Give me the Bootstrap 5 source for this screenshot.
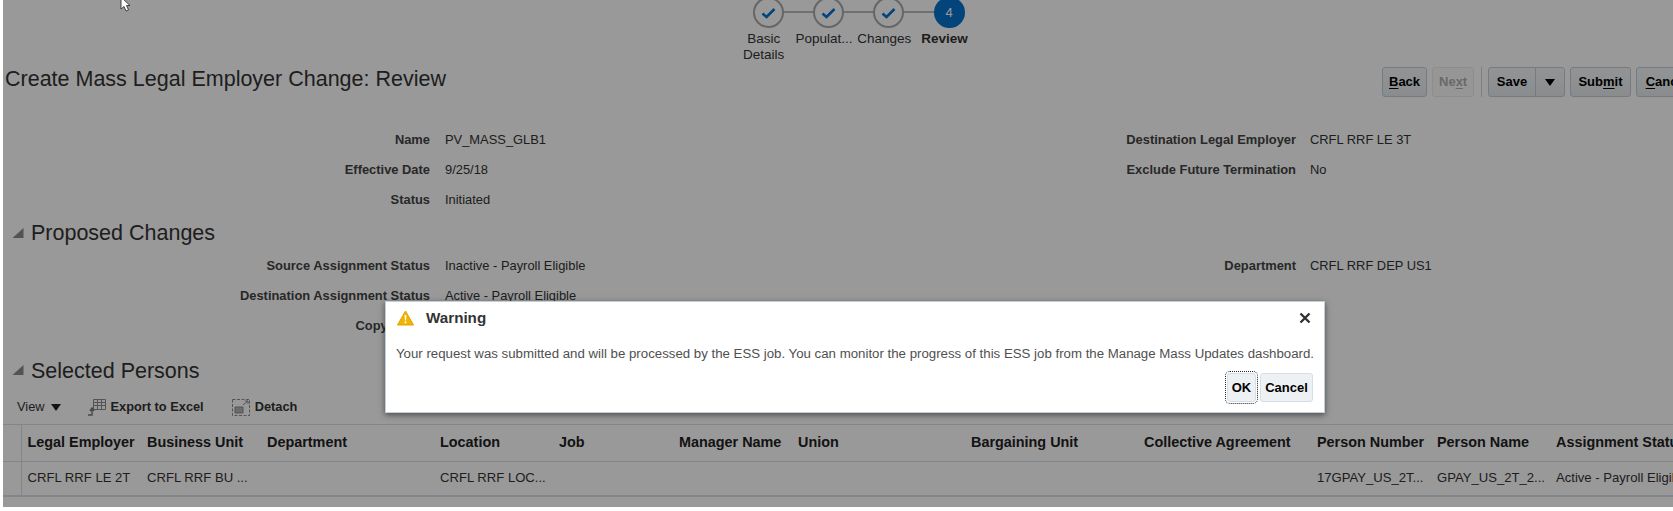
<!DOCTYPE html>
<html lang="en">

<head>
    <meta charset="UTF-8">
    <title>Create Mass Legal Employer Change: Review</title>
    <link rel="stylesheet" href="https://cdn.jsdelivr.net/npm/bootstrap@5.3.0/dist/css/bootstrap.min.css">
    <style>
        html, body {
            height: 511px;
            overflow: hidden;
        }

        body {
            position: relative;
            width: 1673px;
            background: #fff;
            color: #333;
            font-family: "Liberation Sans", Arial, sans-serif;
            font-size: 12.9px;
        }

        #page {
            position: relative;
            z-index: 0;
            width: 1670px;
            height: 507px;
            margin-left: 3px;
            overflow: hidden;
        }

        /* train */
        .train {
            height: 63px;
            padding-left: 735px;
        }

        .train-step {
            width: 60.3px;
            position: relative;
            text-align: center;
            line-height: 16px;
            font-size: 13.5px;
        }

        .train-label {
            padding-right: 9px;
            margin-left: -10px;
            margin-right: -10px;
        }

        .train-dot {
            width: 31px;
            height: 31px;
            margin: -3px auto 3px;
            border-radius: 50%;
            border: 2px solid #aaa;
            background: #fff;
            color: #0572ce;
            position: relative;
            z-index: 1;
        }

        .train-dot.current {
            border: 0;
            background: #0572ce;
            color: #fff;
            font-size: 13px;
        }

        .train-step:not(:last-child)::after {
            content: "";
            position: absolute;
            left: 30px;
            top: 11px;
            width: 60px;
            height: 2px;
            background: #bbb;
        }

        /* title bar */
        .title-bar {
            height: 36px;
            padding-left: 2px;
        }

        .page-title {
            font-size: 21.5px;
            font-weight: 400;
            margin: 0;
            line-height: 32px;
            color: #333;
        }

        .tool-btn {
            height: 30px;
            padding: 0 6px;
            font-size: 13px;
            font-weight: 700;
            line-height: 28px;
            color: #000;
            background: linear-gradient(#f4f7f9, #e6eaed);
            border: 1px solid #c4ced7;
            border-radius: 3px;
            flex: none;
        }

        .tool-btn u {
            text-underline-offset: 2px;
        }

        .tool-btn[disabled] {
            color: #b0b0b0;
            background: #fbfbfb;
            border-color: #ececec;
            opacity: 1;
        }

        .btn-save {
            width: 48px;
            border-radius: 3px 0 0 3px;
            padding: 0;
        }

        .btn-caret {
            width: 30px;
            margin-left: -1px;
            border-radius: 0 3px 3px 0;
            padding: 0;
        }

        .btn-back { width: 45px; }
        .btn-next { width: 42px; margin-left: 5px; }
        .btn-submit { width: 61px; margin-left: 5px; }
        .btn-cancel-bar { width: 62px; margin-left: 5px; }

        .tool-sep {
            width: 1px;
            height: 30px;
            background: #d3d8dc;
            margin: 0 6px 0 7px;
            flex: none;
        }

        .caret-down {
            display: inline-block;
            width: 0;
            height: 0;
            border-left: 5px solid transparent;
            border-right: 5px solid transparent;
            border-top: 7px solid #000;
        }

        .actions {
            width: 291px;
            flex: none;
            margin-left: auto;
            margin-top: 4px;
            height: 30px;
        }

        /* form */
        .form-row-line {
            height: 30px;
            align-items: center;
        }

        .field-label {
            width: 442px;
            text-align: right;
            font-weight: 700;
            color: #444;
            padding-right: 15px;
            flex: none;
        }

        .field-value {
            width: 450px;
            flex: none;
            color: #333;
        }

        .field-label-r {
            width: 415px;
            text-align: right;
            font-weight: 700;
            color: #444;
            padding-right: 14px;
            flex: none;
        }

        .summary-form {
            margin-top: 26px;
        }

        .section-head {
            height: 36px;
            align-items: center;
            padding-left: 9px;
        }

        .section-persons {
            margin-top: 11px;
        }

        .section-head h2 {
            font-size: 21.5px;
            font-weight: 400;
            margin: 0 0 0 7px;
            padding-top: 2px;
            color: #333;
        }

        .section-persons h2 {
            padding-top: 4px;
        }

        .disclose {
            width: 12px;
            height: 12px;
            flex: none;
        }

        /* table toolbar */
        .grid-tools {
            height: 36px;
            padding-left: 14px;
            padding-top: 2px;
            font-size: 12.8px;
            font-weight: 700;
            color: #333;
        }

        .view-menu {
            font-weight: 400;
            margin-right: 26px;
        }

        .view-menu .caret-down {
            margin-left: 6px;
            border-top-color: #222;
        }

        .grid-tool {
            margin-right: 27px;
        }

        /* table */
        .persons {
            table-layout: fixed;
            width: 1720px;
            margin: 0;
            border-collapse: collapse;
        }

        .persons th, .persons td {
            padding: 0 2px 0 6px;
            background: transparent;
            white-space: nowrap;
            overflow: hidden;
            text-overflow: ellipsis;
            border: 0;
            color: #333;
            vertical-align: middle;
        }

        .persons th {
            height: 37px;
            font-size: 14.4px;
            color: #222;
            border-top: 1px solid #d6dfe6;
            border-bottom: 1px solid #d6dfe6;
        }

        .persons td {
            height: 34px;
            font-size: 13.1px;
            border-bottom: 2px solid #d6dfe6;
        }

        .persons .row-head {
            padding: 0;
            border-right: 1px solid #d6dfe6;
        }

        .c0 { width: 18px; }
        .c1 { width: 119px; }
        .c1w { width: 120px; }
        .c2 { width: 174px; }
        .c3 { width: 173px; }

        /* glass over the page */
        #glass {
            position: absolute;
            left: 3px;
            top: 0;
            right: 0;
            bottom: 4px;
            background: rgba(0, 0, 0, .4);
        }

        .warn-dialog {
            position: absolute;
            left: 385px;
            top: 301px;
            width: 940px;
            height: 112px;
            border: 1px solid #c4ced7;
            border-radius: 0;
            box-shadow: 0 2px 6px rgba(0, 0, 0, .5);
            background: #fff;
            padding: 6px 11px 0 10px;
        }

        .warn-head {
            height: 20px;
        }

        .warn-icon {
            margin-left: 1px;
        }

        .warn-title {
            font-size: 15.2px;
            font-weight: 700;
            color: #333;
            margin-left: 12px;
        }

        .warn-close {
            width: 12px;
            height: 12px;
            margin-right: 2px;
        }

        .warn-text {
            margin: 18px 0 0;
            font-size: 13.25px;
            color: #4f4f4f;
            line-height: 16px;
            white-space: nowrap;
        }

        .warn-actions {
            margin-top: 11px;
        }

        .dlg-btn {
            height: 29px;
            padding: 0;
            font-size: 13px;
            font-weight: 700;
            line-height: 27px;
            color: #000;
            background: #eef1f3;
            border: 1px solid #d6dfe6;
            border-radius: 3px;
        }

        .dlg-ok {
            width: 29px;
            margin-right: 4px;
            outline: 1px dotted #222;
            outline-offset: 1px;
        }

        .dlg-cancel {
            width: 53px;
        }

        #cursor {
            position: absolute;
            left: 120px;
            top: -3px;
            width: 14px;
            height: 16px;
        }
    </style>
</head>

<body>
    <div id="page">
        <div class="train d-flex">
            <div class="train-step">
                <div class="train-dot d-flex align-items-center justify-content-center">
                    <svg width="15" height="12" viewBox="0 0 15 12"><path d="M1.5 6.5 5.5 10 13.5 2" fill="none" stroke="currentColor" stroke-width="2.6"/></svg>
                </div>
                <div class="train-label">Basic<br>Details</div>
            </div>
            <div class="train-step">
                <div class="train-dot d-flex align-items-center justify-content-center">
                    <svg width="15" height="12" viewBox="0 0 15 12"><path d="M1.5 6.5 5.5 10 13.5 2" fill="none" stroke="currentColor" stroke-width="2.6"/></svg>
                </div>
                <div class="train-label">Populat...</div>
            </div>
            <div class="train-step">
                <div class="train-dot d-flex align-items-center justify-content-center">
                    <svg width="15" height="12" viewBox="0 0 15 12"><path d="M1.5 6.5 5.5 10 13.5 2" fill="none" stroke="currentColor" stroke-width="2.6"/></svg>
                </div>
                <div class="train-label">Changes</div>
            </div>
            <div class="train-step">
                <div class="train-dot current d-flex align-items-center justify-content-center">4</div>
                <div class="train-label"><b>Review</b></div>
            </div>
        </div>

        <div class="title-bar d-flex">
            <h1 class="page-title">Create Mass Legal Employer Change: Review</h1>
            <div class="actions d-flex align-items-center">
                <button class="btn tool-btn btn-back"><u>B</u>ack</button>
                <button class="btn tool-btn btn-next" disabled>Ne<u>x</u>t</button>
                <span class="tool-sep"></span>
                <button class="btn tool-btn btn-save">Save</button>
                <button class="btn tool-btn btn-caret"><span class="caret-down"></span></button>
                <button class="btn tool-btn btn-submit">Sub<u>m</u>it</button>
                <button class="btn tool-btn btn-cancel-bar"><u>C</u>ancel</button>
            </div>
        </div>

        <div class="summary-form">
            <div class="d-flex form-row-line">
                <div class="field-label">Name</div>
                <div class="field-value">PV_MASS_GLB1</div>
                <div class="field-label-r">Destination Legal Employer</div>
                <div>CRFL RRF LE 3T</div>
            </div>
            <div class="d-flex form-row-line">
                <div class="field-label">Effective Date</div>
                <div class="field-value">9/25/18</div>
                <div class="field-label-r">Exclude Future Termination</div>
                <div>No</div>
            </div>
            <div class="d-flex form-row-line">
                <div class="field-label">Status</div>
                <div class="field-value">Initiated</div>
            </div>
        </div>

        <div class="section-head d-flex">
            <svg class="disclose" viewBox="0 0 12 12"><path d="M11.5 1V11H.5Z" fill="#8a8a8a"/></svg>
            <h2>Proposed Changes</h2>
        </div>
        <div>
            <div class="d-flex form-row-line">
                <div class="field-label">Source Assignment Status</div>
                <div class="field-value">Inactive - Payroll Eligible</div>
                <div class="field-label-r">Department</div>
                <div>CRFL RRF DEP US1</div>
            </div>
            <div class="d-flex form-row-line">
                <div class="field-label">Destination Assignment Status</div>
                <div class="field-value">Active - Payroll Eligible</div>
            </div>
            <div class="d-flex form-row-line">
                <div class="field-label">Copy Salary</div>
            </div>
        </div>

        <div class="section-head section-persons d-flex">
            <svg class="disclose" viewBox="0 0 12 12"><path d="M11.5 1V11H.5Z" fill="#8a8a8a"/></svg>
            <h2>Selected Persons</h2>
        </div>

        <div class="grid-tools d-flex align-items-center">
            <span class="view-menu">View<span class="caret-down"></span></span>
            <span class="grid-tool d-flex align-items-center gap-1">
                <svg width="20" height="20" viewBox="0 0 20 20" fill="none" stroke="#8d8d8d">
                    <path d="M6.5 2.5h12v10h-12zM6.5 5.5h12M6.5 8.5h12M10.5 2.5v10M14.5 2.5v10"/>
                    <path d="M1 18h4v-6M3 14l2-3 2 3" stroke="#777" stroke-width="1.4"/>
                </svg>
                Export to Excel
            </span>
            <span class="grid-tool d-flex align-items-center gap-1">
                <svg width="20" height="20" viewBox="0 0 20 20" fill="none" stroke="#8d8d8d">
                    <path d="M1.5 2.5h17v16h-17z" stroke-dasharray="3 1.5"/>
                    <path d="M4 10h8v6H4z" fill="#b5b5b5"/>
                    <path d="M12 8l5-4M14 4h3v3"/>
                </svg>
                Detach
            </span>
        </div>

        <table class="table persons">
            <colgroup>
                <col class="c0"><col class="c1w"><col class="c1w"><col class="c3"><col class="c1"><col class="c1w"><col class="c1"><col class="c3"><col class="c3"><col class="c3"><col class="c1w"><col class="c1"><col class="c2">
            </colgroup>
            <thead>
                <tr>
                    <th class="row-head"></th>
                    <th>Legal Employer</th>
                    <th>Business Unit</th>
                    <th>Department</th>
                    <th>Location</th>
                    <th>Job</th>
                    <th>Manager Name</th>
                    <th>Union</th>
                    <th>Bargaining Unit</th>
                    <th>Collective Agreement</th>
                    <th>Person Number</th>
                    <th>Person Name</th>
                    <th>Assignment Status</th>
                </tr>
            </thead>
            <tbody>
                <tr>
                    <td class="row-head"></td>
                    <td>CRFL RRF LE 2T</td>
                    <td>CRFL RRF BU ...</td>
                    <td></td>
                    <td>CRFL RRF LOC...</td>
                    <td></td>
                    <td></td>
                    <td></td>
                    <td></td>
                    <td></td>
                    <td>17GPAY_US_2T...</td>
                    <td>GPAY_US_2T_2...</td>
                    <td>Active - Payroll Eligible</td>
                </tr>
            </tbody>
        </table>
    </div>

    <div id="glass"></div>

    <div class="card warn-dialog">
        <div class="warn-head d-flex align-items-center">
            <svg class="warn-icon" width="17" height="16" viewBox="0 0 17 16">
                <path d="M8.5 1 16.5 15H.5Z" fill="#f0b400" stroke="#e2a200" stroke-linejoin="round"/>
                <path d="M7.6 5h1.8l-.3 5.5H7.9Z" fill="#fff"/>
                <rect x="7.6" y="11.5" width="1.8" height="1.8" fill="#fff"/>
            </svg>
            <span class="warn-title">Warning</span>
            <svg class="warn-close ms-auto" viewBox="0 0 12 12"><path d="M1.5 1.5 10.5 10.5M10.5 1.5 1.5 10.5" stroke="#333" stroke-width="2.4"/></svg>
        </div>
        <p class="warn-text">Your request was submitted and will be processed by the ESS job. You can monitor the progress of this ESS job from the Manage Mass Updates dashboard.</p>
        <div class="warn-actions d-flex justify-content-end">
            <button class="btn dlg-btn dlg-ok">OK</button>
            <button class="btn dlg-btn dlg-cancel">Cancel</button>
        </div>
    </div>

    <svg id="cursor" viewBox="0 0 14 16"><path d="M1 0V12L4 9.5 6 14 8.5 13 6.5 8.5H10Z" fill="#fff" stroke="#222" stroke-width=".8"/></svg>

    <script src="https://cdn.jsdelivr.net/npm/bootstrap@5.3.0/dist/js/bootstrap.bundle.min.js"></script>
</body>

</html>
